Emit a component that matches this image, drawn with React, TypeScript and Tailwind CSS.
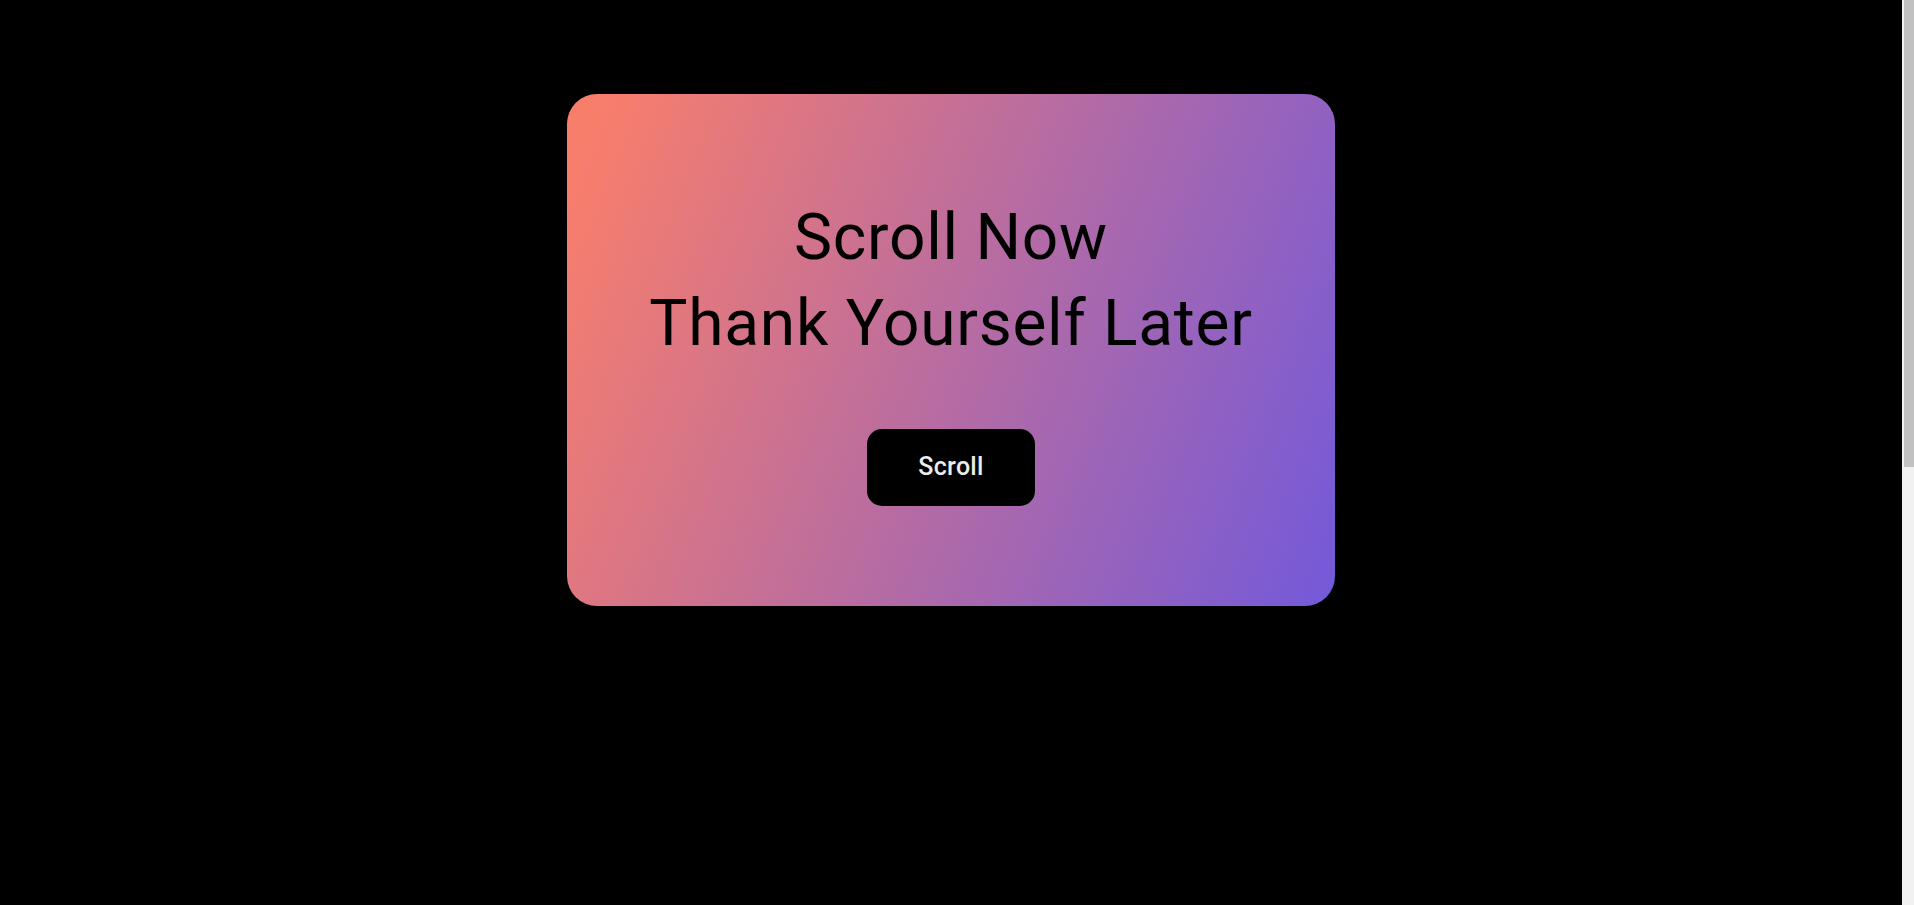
import React from 'react';

const App: React.FC = () => {
  return (
    <div className="flex min-h-[1754px] bg-black font-['Roboto',sans-serif]">
      <main className="mr-[12px] flex flex-1 justify-center pt-[94px]">
        {/* Hero card */}
        <section className="flex h-[32rem] w-[48rem] flex-col items-center justify-center rounded-[30px] bg-[linear-gradient(112deg,#f87e6c_4%,#7359da)]">
          <h1 className="text-center text-[64px] font-normal leading-[86px] tracking-[0.75px] text-black">
            Scroll Now
            <br />
            Thank Yourself Later
          </h1>
          <button className="mt-[62px] flex h-[77px] w-[168px] items-center justify-center rounded-[15px] bg-black text-[25px] font-medium tracking-[0.3px] text-[#ececec]">
            Scroll
          </button>
        </section>
      </main>
      {/* window scrollbar as seen in the capture */}
      <div className="fixed right-0 top-0 h-screen w-[12px] bg-[#f1f1f1] pl-[2px]">
        <div className="h-[467px] w-full bg-[#c1c1c1]" />
      </div>
    </div>
  );
};

export default App;
